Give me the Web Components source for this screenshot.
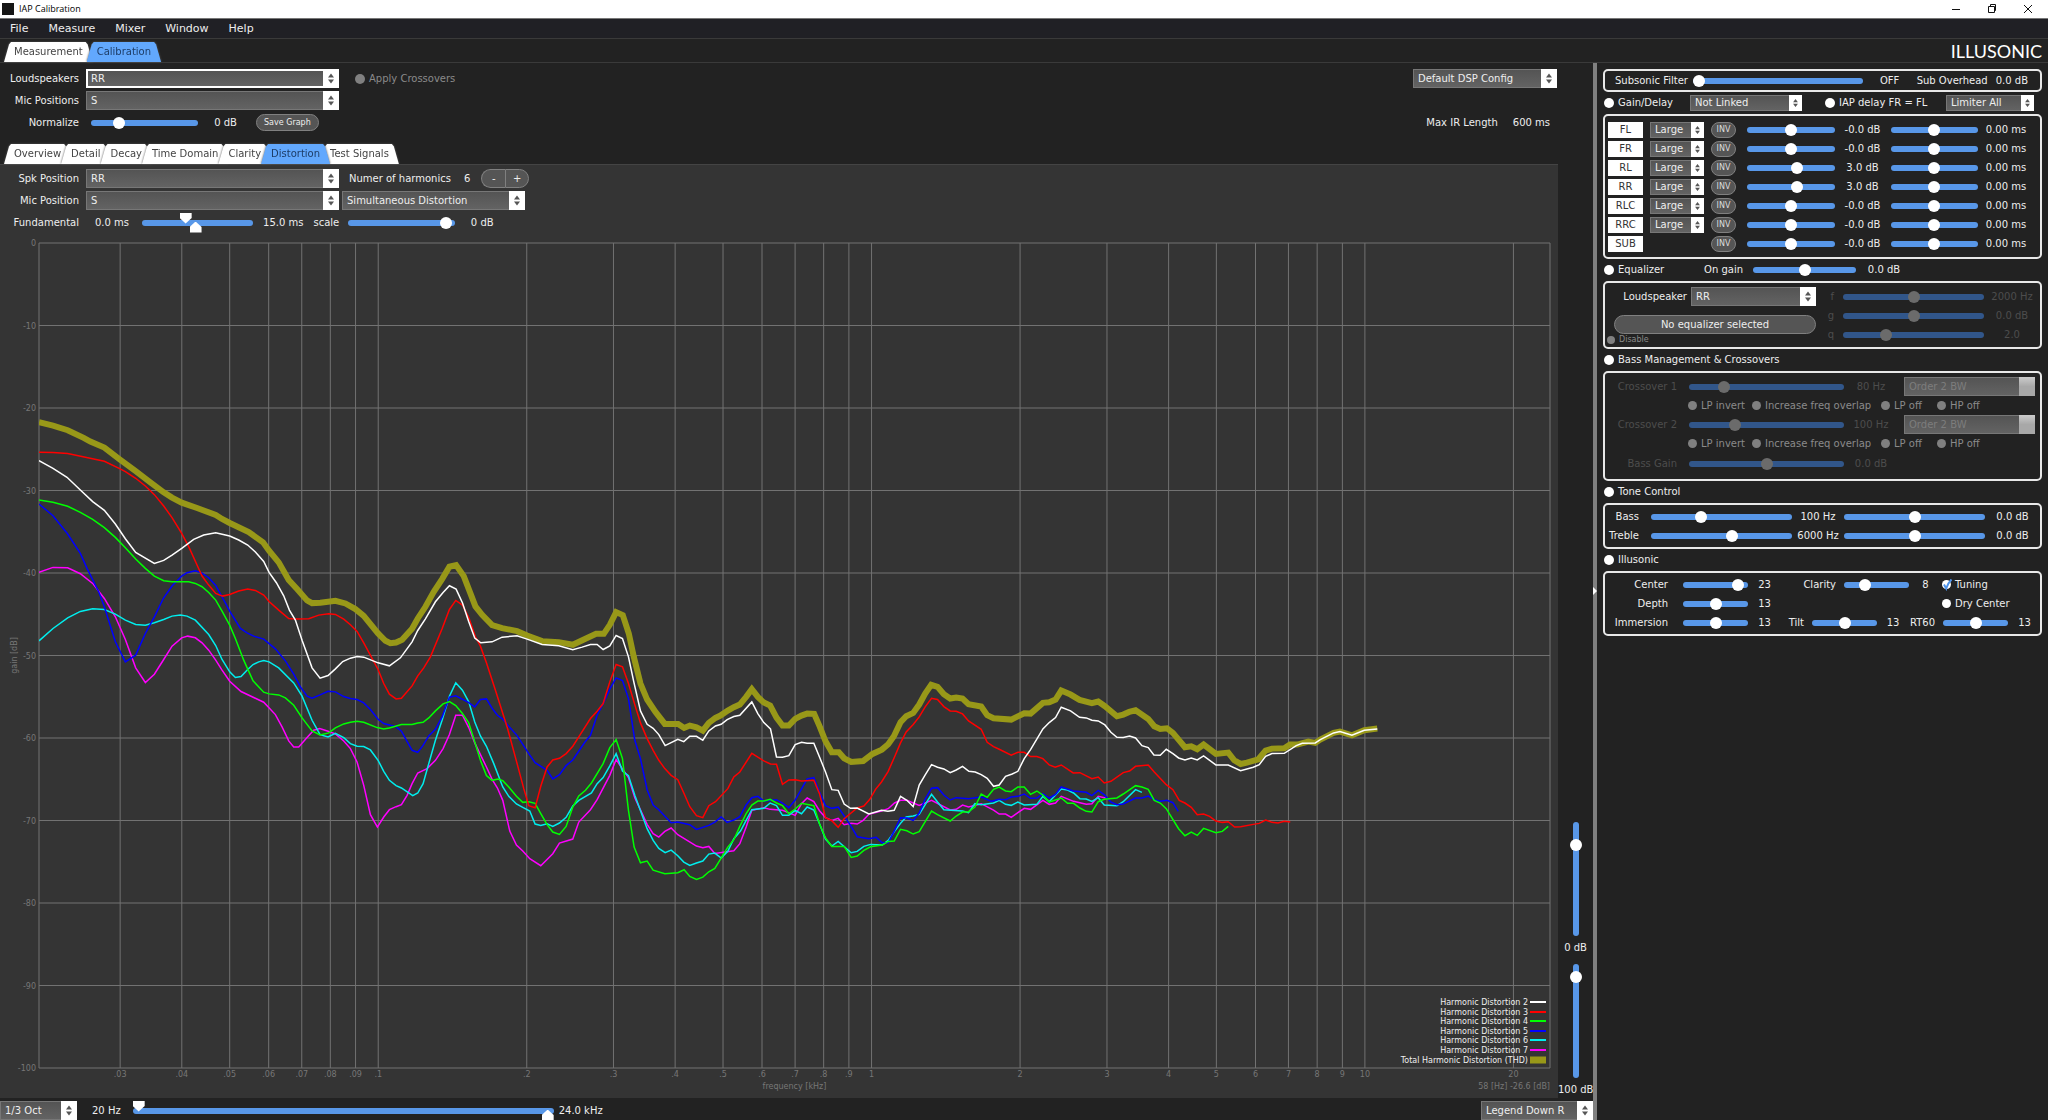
<!DOCTYPE html>
<html lang="en">
<head>
<meta charset="utf-8">
<title>IAP Calibration</title>
<style>
  html, body { margin: 0; height: 100%; }
  body {
    background: #222;
    color: #eee;
    font: 10px/12px "DejaVu Sans", Verdana, sans-serif;
  }
</style>
</head>
<body>
<iap-app></iap-app>

<script>
// Slider with its label and value: label | track | value
class IapSlider extends HTMLElement {
  constructor() {
    super();
    this.attachShadow({ mode: 'open' });
  }

  connectedCallback() {
    const label = this.getAttribute('label') || '';
    const name = this.getAttribute('name') || 'value';
    const text = this.getAttribute('text') || '';
    const value = this.getAttribute('value') || 50;
    const disabled = this.hasAttribute('disabled') ? 'disabled' : '';
    this.shadowRoot.innerHTML = `
      <style>
        :host {
          display: flex;
          align-items: center;
          flex: 1 1 auto;
          min-width: 0;
          white-space: nowrap;
        }
        label {
          flex: none;
          width: var(--label-w, auto);
          margin-right: var(--label-gap, 12px);
          text-align: right;
        }
        output {
          flex: none;
          width: var(--out-w, 56px);
          text-align: center;
        }
        input {
          -webkit-appearance: none;
          appearance: none;
          flex: var(--track, 1 1 40px);
          width: 40px;
          min-width: 0;
          height: 12px;
          margin: 0;
          background: none;
        }
        input::-webkit-slider-runnable-track {
          height: 6px;
          border-radius: 3px;
          background: #5897e8;
        }
        input::-webkit-slider-thumb {
          -webkit-appearance: none;
          width: 12px;
          height: 12px;
          margin-top: -3px;
          border-radius: 50%;
          background: #fff;
        }
        :host([disabled]) { color: #4d4d4d; }
        :host([disabled]) input::-webkit-slider-runnable-track { background: #31568a; }
        :host([disabled]) input::-webkit-slider-thumb { background: #6b6b6b; }

        :host([vertical]) { flex: none; flex-direction: column; }
        :host([vertical]) input {
          flex: none;
          writing-mode: vertical-lr;
          direction: rtl;
          width: 12px;
          height: 114px;
        }
        :host([vertical]) input::-webkit-slider-runnable-track {
          width: 6px;
          height: auto;
        }
        :host([vertical]) input::-webkit-slider-thumb {
          margin-top: 0;
          margin-left: -3px;
        }
        :host([vertical]) output { margin-top: 6px; }
      </style>
      ${label ? `<label for="range">${label}</label>` : ''}
      <input type="range" id="range" min="0" max="100" value="${value}" aria-label="${label || name}" ${disabled}>
      ${text ? `<output for="range">${text}</output>` : ''}
    `;
  }
}

// Slider with a lower and an upper handle on one track
class IapRange extends HTMLElement {
  constructor() {
    super();
    this.attachShadow({ mode: 'open' });
  }

  connectedCallback() {
    const name = this.getAttribute('name') || '';
    this.shadowRoot.innerHTML = `
      <style>
        :host { display: grid; align-items: center; }
        input {
          -webkit-appearance: none;
          appearance: none;
          grid-area: 1 / 1;
          width: 100%;
          height: 20px;
          margin: 0;
          background: none;
          pointer-events: none;
        }
        input::-webkit-slider-runnable-track { height: 6px; border-radius: 3px; }
        .low::-webkit-slider-runnable-track { background: #5897e8; }
        input::-webkit-slider-thumb {
          -webkit-appearance: none;
          width: 12px;
          height: 11px;
          background: #fff;
          pointer-events: auto;
        }
        .low::-webkit-slider-thumb {
          margin-top: -7px;
          clip-path: polygon(0 0, 100% 0, 100% 50%, 50% 100%, 0 50%);
        }
        .high::-webkit-slider-thumb {
          margin-top: 2px;
          clip-path: polygon(50% 0, 100% 50%, 100% 100%, 0 100%, 0 50%);
        }
      </style>
      <input class="low" type="range" value="${this.getAttribute('low')}" aria-label="${name} from">
      <input class="high" type="range" value="${this.getAttribute('high')}" aria-label="${name} to">
    `;
  }
}

// Drop-down with the white stepper box at its right end
class IapSelect extends HTMLElement {
  constructor() {
    super();
    this.attachShadow({ mode: 'open' });
  }

  connectedCallback() {
    const label = this.getAttribute('label') || '';
    const name = this.getAttribute('name') || label;
    const disabled = this.hasAttribute('disabled') ? 'disabled' : '';
    this.shadowRoot.innerHTML = `
      <style>
        :host { display: flex; align-items: center; white-space: nowrap; }
        label {
          width: var(--label-w, auto);
          margin-right: var(--label-gap, 7px);
          text-align: right;
        }
        .box {
          display: grid;
          grid-template-columns: minmax(0, 1fr) var(--arrow-w, 16px);
          flex: none;
          width: var(--box-w, 253px);
          height: var(--box-h, 19px);
        }
        select {
          -webkit-appearance: none;
          appearance: none;
          grid-area: 1 / 1 / 2 / 3;
          box-sizing: border-box;
          width: 100%;
          height: 100%;
          margin: 0;
          padding: 0 4px;
          border: 1px solid #777;
          border-radius: 0;
          background: linear-gradient(#545454, #636363);
          color: #eee;
          font: inherit;
        }
        svg {
          grid-area: 1 / 2;
          width: 100%;
          height: 100%;
          background: #fff;
          pointer-events: none;
        }
        :host([focused]) select { border: 2px solid #fff; padding: 0 3px; }
        :host([disabled]) select { color: #7d7d7d; opacity: 1; }
        :host([disabled]) svg { background: linear-gradient(#ccc, #a8a8a8 50%); }
        :host([disabled]) path { display: none; }
      </style>
      ${label ? `<label for="list">${label}</label>` : ''}
      <div class="box">
        <select id="list" aria-label="${name}" ${disabled}><option>${this.getAttribute('value')}</option></select>
        <svg viewBox="0 0 16 19"><path d="M8 4.5 11 8.5H5zM8 14.5 11 10.5H5z" fill="#555"/></svg>
      </div>
    `;
  }
}

class IapCheck extends HTMLElement {
  constructor() {
    super();
    this.attachShadow({ mode: 'open' });
  }

  connectedCallback() {
    const checked = this.hasAttribute('checked') ? 'checked' : '';
    const disabled = this.hasAttribute('disabled') ? 'disabled' : '';
    this.shadowRoot.innerHTML = `
      <style>
        :host { display: flex; align-items: center; white-space: nowrap; }
        label { display: flex; align-items: center; gap: 4px; }
        .mark { display: grid; place-items: center; }
        input {
          -webkit-appearance: none;
          appearance: none;
          grid-area: 1 / 1;
          width: var(--dot, 10px);
          height: var(--dot, 10px);
          margin: 0;
          border-radius: 50%;
          background: #fff;
        }
        svg { grid-area: 1 / 1; width: 10px; height: 12px; margin-right: -1px; pointer-events: none; display: none; }
        input:checked + svg { display: block; }
        :host([disabled]) { color: #8a8a8a; }
        :host([disabled]) input { background: #808080; }
      </style>
      <label>
        <span class="mark">
          <input type="checkbox" ${checked} ${disabled}>
          <svg viewBox="0 0 10 12"><path d="M2 5.5 4.2 9.5Q5.5 4.5 9.5 0.5" fill="none" stroke="#4e93ea" stroke-width="2"/></svg>
        </span>
        <slot></slot>
      </label>
    `;
  }
}

class IapTabs extends HTMLElement {
  constructor() {
    super();
    this.attachShadow({ mode: 'open' });
  }

  connectedCallback() {
    const active = this.getAttribute('active');
    const tabs = this.getAttribute('tabs').split(',');
    this.shadowRoot.innerHTML = `
      <style>
        :host { display: block; }
        nav { display: flex; padding-left: 4px; }
        button {
          position: relative;
          z-index: 0;
          height: 20px;
          margin: 0 var(--overlap, -10px) 0 0;
          padding: 0 10px;
          border: 0;
          background: none;
          color: #444;
          font: inherit;
          filter: drop-shadow(0 0 1px #555);
        }
        button::before {
          content: '';
          position: absolute;
          inset: 0;
          z-index: -1;
          background: #fff;
          clip-path: polygon(0 100%, 5px 12%, 7px 0, calc(100% - 7px) 0, calc(100% - 5px) 12%, 100% 100%);
        }
        button[aria-selected="true"] { z-index: 1; color: #1d3c66; }
        button[aria-selected="true"]::before { background: #62a8fd; }
      </style>
      <nav role="tablist">
        ${tabs.map(t => `<button role="tab" aria-selected="${t === active}">${t}</button>`).join('')}
      </nav>
    `;
  }
}

// Heading row and a bordered box under it
class IapSection extends HTMLElement {
  constructor() {
    super();
    this.attachShadow({ mode: 'open' });
  }

  connectedCallback() {
    this.shadowRoot.innerHTML = `
      <style>
        :host { display: block; }
        header {
          display: flex;
          align-items: center;
          height: 22px;
          padding-left: 1px;
        }
        :host([plain]) header { display: none; }
        .box {
          border: 2px solid #e8e8e8;
          border-radius: 5px;
          padding: var(--box-pad, 3px 0);
        }
      </style>
      <header><slot name="head"></slot></header>
      <div class="box"><slot></slot></div>
    `;
  }
}

class IapChannel extends HTMLElement {
  constructor() {
    super();
    this.attachShadow({ mode: 'open' });
  }

  connectedCallback() {
    const name = this.getAttribute('name');
    const size = this.getAttribute('size');
    this.shadowRoot.innerHTML = `
      <style>
        :host {
          display: flex;
          align-items: center;
          height: 16px;
          margin-bottom: 3px;
          padding: 0 6px 0 3px;
        }
        :host(:last-child) { margin-bottom: 0; }
        .name {
          width: 35px;
          line-height: 16px;
          margin-right: 7px;
          background: #fff;
          color: #333;
          text-align: center;
        }
        .size { width: 54px; margin-right: 7px; }
        iap-select { --box-w: 54px; --box-h: 16px; --arrow-w: 13px; }
        button {
          width: 25px;
          height: 16px;
          margin-right: 11px;
          padding: 0;
          border: 1px solid #808080;
          border-radius: 8px;
          background: #555;
          color: #ddd;
          font: inherit;
          font-size: 8px;
          line-height: 10px;
        }
      </style>
      <span class="name">${name}</span>
      <span class="size">${size ? `<iap-select name="${name} size" value="${size}"></iap-select>` : ''}</span>
      <button>INV</button>
      <iap-slider name="${name} gain" value="${this.getAttribute('value')}" text="${this.getAttribute('gain')}"></iap-slider>
      <iap-slider name="${name} delay" value="50" text="0.00 ms"></iap-slider>
    `;
  }
}

// Traces, drawn in thirds of a pixel at the default window size
const TRACES = [
  ['Total Harmonic Distortion (THD)', '#989818', `26,67 68,77 112,91 160,114 180,125 222,143 268,178 315,213 360,247 400,277 425,293 454,308 500,324 556,345 575,357 598,369 655,396 698,427 716,452 745,487 775,540 800,567 830,601 845,609 870,608 915,602 945,610 975,627 1000,647 1043,700 1065,722 1080,729 1097,727 1115,719 1145,686 1162,655 1185,620 1210,575 1235,537 1257,500 1277,495 1300,528 1320,580 1335,619 1355,644 1385,675 1415,684 1460,693 1490,706 1535,723 1585,726 1627,734 1665,716 1697,701 1720,701 1738,674 1757,636 1777,645 1795,700 1810,770 1830,850 1850,898 1875,935 1903,971 1943,971 1961,983 1978,976 1998,981 2017,991 2035,968 2055,953 2070,946 2092,931 2110,921 2128,913 2147,890 2164,867 2182,890 2200,907 2219,916 2238,952 2256,976 2275,976 2294,956 2313,946 2330,940 2351,941 2368,980 2385,1023 2404,1056 2425,1056 2441,1074 2462,1085 2498,1082 2526,1061 2554,1048 2573,1032 2590,1008 2610,966 2627,948 2648,938 2666,913 2684,880 2702,854 2721,860 2740,882 2759,895 2777,892 2796,895 2814,912 2852,919 2870,945 2889,954 2942,958 2981,939 3000,940 3037,908 3056,906 3075,898 3092,871 3120,883 3147,899 3184,909 3203,904 3223,918 3259,948 3278,943 3296,935 3315,930 3353,956 3371,978 3389,986 3409,984 3427,998 3463,1041 3482,1038 3500,1047 3519,1033 3556,1061 3593,1057 3611,1080 3630,1091 3649,1087 3683,1077 3705,1051 3724,1045 3761,1044 3778,1033 3800,1033 3833,1024 3854,1028 3869,1018 3909,998 3928,994 3964,1005 4001,990 4040,985`],
  ['Harmonic Distortion 7', '#f0f', `26,517 68,502 112,503 150,521 187,550 222,595 255,650 285,718 316,803 345,847 372,822 400,778 425,738 454,713 472,708 495,713 515,728 535,750 556,780 575,810 598,843 632,874 670,892 700,906 735,943 755,980 775,1022 790,1040 805,1040 830,1012 850,990 868,985 893,993 915,1001 940,1022 960,1045 980,1085 1000,1155 1020,1243 1041,1280 1060,1250 1077,1228 1097,1219 1113,1213 1130,1185 1145,1150 1162,1118 1190,1105 1215,1080 1238,1045 1257,1003 1276,945 1296,945 1315,982 1333,1028 1350,1063 1368,1100 1385,1137 1401,1163 1417,1200 1438,1292 1458,1334 1477,1352 1498,1375 1531,1396 1567,1360 1587,1328 1627,1316 1645,1265 1680,1228 1700,1198 1738,1125 1757,1078 1794,1132 1813,1192 1850,1272 1868,1300 1885,1310 1903,1293 1922,1283 1942,1303 1998,1337 2017,1342 2035,1338 2053,1359 2110,1351 2128,1330 2147,1280 2164,1230 2200,1222 2219,1227 2256,1230 2294,1245 2313,1210 2330,1193 2350,1204 2367,1231 2385,1252 2404,1260 2423,1254 2441,1273 2462,1269 2480,1271 2498,1260 2515,1242 2553,1232 2573,1225 2592,1208 2610,1200 2629,1200 2666,1215 2703,1200 2759,1229 2777,1227 2796,1214 2814,1220 2852,1210 2889,1229 2906,1241 2925,1241 2942,1251 2962,1237 2981,1224 3000,1227 3037,1200 3056,1212 3075,1208 3092,1188 3129,1203 3167,1212 3184,1210 3203,1188 3225,1193`],
  ['Harmonic Distortion 6', '#0ee', `26,722 68,685 112,653 150,634 187,626 222,628 255,642 285,660 316,673 345,675 372,668 400,658 425,648 450,645 470,648 495,660 535,703 556,736 575,778 598,815 615,832 632,829 652,808 668,793 685,785 700,781 716,785 745,803 790,848 815,888 845,960 869,1003 893,1010 915,999 940,1012 960,1030 980,1038 1000,1039 1020,1049 1043,1080 1060,1113 1077,1140 1097,1156 1113,1163 1147,1186 1162,1178 1178,1150 1195,1090 1215,1020 1235,960 1257,888 1276,848 1296,870 1315,905 1333,965 1350,1007 1368,1038 1390,1090 1417,1160 1435,1188 1458,1211 1477,1221 1498,1232 1514,1271 1531,1275 1550,1270 1567,1278 1587,1268 1607,1251 1627,1217 1645,1200 1683,1178 1700,1150 1718,1132 1738,1097 1757,1060 1776,1112 1794,1126 1813,1185 1850,1285 1868,1320 1885,1344 1904,1357 1922,1349 1942,1366 1960,1385 1978,1395 1998,1388 2017,1382 2035,1361 2053,1358 2072,1373 2092,1353 2110,1315 2130,1292 2164,1228 2200,1224 2219,1208 2238,1216 2256,1245 2275,1245 2294,1230 2313,1240 2330,1220 2350,1229 2367,1270 2385,1316 2404,1337 2423,1323 2462,1357 2480,1353 2500,1338 2520,1332 2555,1334 2573,1320 2592,1293 2610,1269 2627,1250 2648,1247 2666,1242 2684,1213 2703,1182 2721,1205 2740,1228 2796,1232 2814,1237 2833,1210 2852,1213 2889,1208 2906,1200 2925,1212 2942,1215 2962,1205 2981,1214 3019,1212 3037,1188 3056,1204 3092,1166 3111,1169 3129,1178 3148,1195 3167,1196 3184,1203 3203,1192 3221,1214 3259,1216 3278,1204 3315,1168 3334,1176`],
  ['Harmonic Distortion 5', '#00f', `26,312 68,347 112,402 150,460 170,505 205,575 222,620 255,725 285,785 316,765 345,700 372,650 400,593 425,558 454,528 470,518 495,512 515,519 535,533 556,556 575,590 598,633 630,685 650,698 670,708 700,717 735,746 765,782 790,822 810,860 830,888 845,894 869,884 893,873 915,875 940,889 960,895 980,898 1000,908 1020,928 1043,957 1060,970 1077,974 1097,979 1113,993 1127,1018 1145,1050 1162,1056 1177,1037 1195,1007 1215,987 1235,950 1257,891 1276,887 1296,897 1315,907 1333,920 1350,898 1368,896 1385,924 1401,945 1415,955 1460,1006 1495,1060 1514,1087 1550,1110 1567,1136 1587,1123 1607,1096 1627,1079 1663,1026 1680,1005 1700,945 1718,910 1738,867 1757,833 1776,841 1794,895 1813,1020 1830,1075 1850,1168 1868,1214 1885,1228 1922,1267 1942,1265 1978,1273 1998,1287 2035,1275 2053,1265 2072,1250 2090,1266 2110,1259 2128,1249 2147,1214 2164,1192 2182,1188 2200,1202 2238,1198 2256,1208 2275,1222 2294,1199 2330,1136 2350,1132 2367,1175 2385,1216 2404,1224 2423,1220 2460,1275 2480,1309 2515,1315 2537,1311 2555,1327 2573,1327 2592,1290 2610,1252 2629,1253 2648,1260 2666,1238 2684,1196 2703,1164 2721,1162 2740,1184 2759,1199 2777,1192 2814,1195 2852,1190 2883,1203 2906,1197 2925,1198 2942,1190 2962,1188 2981,1181 3000,1194 3019,1193 3037,1180 3056,1193 3075,1182 3092,1160 3128,1172 3167,1176 3184,1186 3203,1170 3221,1183 3241,1205 3259,1213 3278,1211 3315,1193 3334,1193 3353,1187 3371,1198 3389,1203 3409,1200 3427,1207 3443,1233`],
  ['Harmonic Distortion 4', '#0f0', `26,300 68,307 112,319 150,337 187,358 222,383 255,412 285,443 316,477 345,505 372,528 400,542 425,545 475,545 495,550 515,560 535,577 556,600 575,633 598,675 615,715 640,780 668,842 700,876 716,881 745,884 765,893 790,915 815,953 845,992 869,1004 895,998 915,983 940,971 960,966 980,963 1000,966 1040,982 1060,986 1077,983 1113,973 1145,973 1162,968 1178,966 1195,953 1215,932 1238,911 1257,904 1276,916 1296,940 1315,968 1333,1025 1350,1080 1368,1126 1385,1140 1403,1136 1417,1141 1435,1160 1458,1188 1477,1206 1495,1204 1514,1209 1531,1240 1550,1273 1567,1295 1587,1302 1607,1278 1627,1220 1645,1187 1665,1170 1683,1148 1718,1090 1738,1042 1757,1018 1776,1075 1794,1230 1811,1340 1830,1387 1850,1382 1868,1409 1903,1420 1942,1417 1961,1408 1978,1428 1998,1437 2017,1430 2035,1414 2053,1404 2072,1373 2092,1340 2110,1318 2128,1278 2147,1240 2164,1214 2182,1202 2200,1202 2219,1197 2238,1208 2256,1216 2275,1240 2294,1226 2313,1209 2350,1216 2367,1270 2385,1313 2404,1338 2441,1338 2462,1371 2480,1367 2500,1350 2520,1339 2555,1334 2573,1323 2591,1322 2610,1287 2629,1291 2648,1301 2666,1294 2684,1264 2703,1232 2721,1243 2759,1262 2777,1247 2796,1235 2814,1234 2833,1220 2852,1181 2870,1191 2889,1167 2906,1160 2925,1172 2942,1174 2962,1160 2981,1160 3000,1182 3019,1172 3037,1184 3056,1205 3092,1193 3111,1209 3129,1209 3148,1223 3167,1233 3184,1235 3203,1204 3221,1197 3259,1193 3278,1181 3315,1156 3334,1160 3353,1167 3371,1200 3389,1208 3407,1225 3444,1285 3463,1306 3482,1295 3500,1305 3519,1284 3556,1297 3575,1293 3593,1278`],
  ['Harmonic Distortion 3', '#f00', `26,157 68,158 112,161 222,184 268,206 285,215 316,235 345,258 372,284 400,318 425,353 454,400 475,440 500,495 515,528 535,555 556,580 577,588 598,583 625,573 652,567 675,571 700,585 716,604 745,630 775,655 795,657 835,656 865,645 895,641 915,643 940,657 960,674 980,694 1000,728 1043,808 1060,850 1077,882 1097,896 1113,894 1145,857 1162,827 1180,803 1200,770 1235,686 1257,628 1276,601 1296,615 1315,652 1335,710 1350,738 1368,788 1395,870 1430,980 1460,1090 1480,1165 1495,1216 1514,1222 1531,1158 1550,1100 1567,1079 1587,1074 1607,1060 1627,1038 1645,1010 1680,955 1700,933 1718,910 1738,845 1757,793 1776,800 1794,850 1815,920 1830,968 1850,1015 1868,1050 1885,1080 1903,1105 1922,1125 1942,1138 1960,1178 1978,1219 1998,1246 2017,1252 2035,1216 2055,1204 2092,1165 2110,1130 2128,1115 2164,1059 2200,1082 2220,1091 2238,1092 2256,1152 2275,1139 2294,1138 2313,1142 2350,1140 2367,1180 2385,1252 2404,1261 2423,1281 2441,1255 2480,1223 2500,1217 2518,1197 2535,1167 2553,1145 2573,1113 2592,1070 2610,1028 2627,995 2648,973 2666,950 2684,920 2703,894 2721,898 2740,919 2759,932 2777,933 2796,941 2814,962 2852,987 2870,1026 2889,1039 2906,1047 2942,1065 2962,1056 2981,1056 3000,1069 3019,1069 3037,1075 3056,1094 3074,1101 3092,1094 3128,1118 3148,1117 3184,1135 3203,1130 3221,1148 3241,1143 3278,1117 3297,1112 3315,1098 3353,1094 3371,1115 3407,1153 3427,1168 3446,1200 3463,1208 3482,1221 3500,1243 3519,1241 3537,1248 3556,1262 3575,1266 3593,1264 3612,1280 3630,1279 3668,1272 3686,1269 3705,1259 3724,1266 3742,1268 3761,1263 3779,1265`],
  ['Harmonic Distortion 2', '#fff', `26,182 68,205 110,232 150,270 187,305 222,331 255,372 285,416 316,457 372,490 400,481 425,465 454,445 490,418 520,405 556,398 598,408 625,420 652,435 675,456 700,484 716,517 738,548 760,587 777,630 795,660 815,720 845,803 869,834 893,826 915,806 937,784 960,774 980,769 1000,771 1043,788 1077,797 1110,773 1145,725 1162,691 1185,656 1215,605 1238,577 1257,557 1277,567 1296,608 1315,665 1333,714 1351,728 1385,725 1415,711 1460,707 1490,717 1535,733 1585,737 1627,749 1655,741 1680,733 1700,733 1718,748 1738,737 1757,706 1776,715 1794,770 1810,845 1830,932 1850,972 1868,984 1885,1003 1904,1036 1942,1017 1960,1024 1978,1008 1998,1008 2017,1020 2035,992 2055,977 2072,972 2090,958 2110,949 2128,945 2164,905 2182,940 2200,967 2220,986 2238,1070 2256,1071 2275,1066 2294,1033 2313,1026 2330,1029 2350,1029 2367,1070 2385,1115 2404,1168 2423,1170 2441,1211 2460,1224 2480,1223 2515,1241 2553,1230 2572,1233 2591,1230 2610,1188 2629,1200 2648,1219 2666,1154 2684,1124 2703,1093 2721,1101 2740,1106 2759,1117 2777,1109 2796,1098 2815,1113 2834,1115 2852,1123 2870,1134 2889,1158 2906,1154 2925,1128 2945,1121 2962,1113 2981,1075 3000,1048 3037,986 3056,967 3075,952 3092,921 3120,932 3147,951 3167,953 3184,960 3203,962 3223,974 3241,996 3259,1011 3278,1012 3297,1007 3315,1013 3334,1036 3353,1042 3370,1064 3389,1065 3407,1047 3427,1060 3444,1073 3463,1079 3482,1073 3500,1079 3519,1067 3556,1094 3593,1094 3630,1111 3668,1101 3686,1093 3705,1068 3724,1060 3761,1059 3797,1036 3815,1029 3854,1028 3869,1018 3909,998 3928,994 3964,1005 4001,990 4040,986`],
];

class IapPlot extends HTMLElement {
  constructor() {
    super();
    this.attachShadow({ mode: 'open' });
  }

  connectedCallback() {
    // log axis from 20.5 Hz to 23.7 kHz, in percent of the width
    const min = Math.log10(0.02054);
    const max = Math.log10(23.72);
    const x = f => ((Math.log10(f) - min) / (max - min) * 100).toFixed(2) + '%';

    const freqs = [];
    for (const decade of [0.01, 0.1, 1, 10]) {
      for (let i = 1; i < 10; i++) {
        const f = decade * i;
        if (f > 0.021 && f < 21 && !(f > 11 && f < 19)) {
          freqs.push(Number(f.toFixed(2)));
        }
      }
    }

    const columns = freqs.map(f => `
      <line x1="${x(f)}" x2="${x(f)}" y1="0" y2="100%"/>
      <text x="${x(f)}" y="100%" dy="9" text-anchor="middle">${String(f).replace(/^0/, '')}</text>`).join('');

    let rows = '';
    for (let i = 0; i <= 10; i++) {
      rows += `
        <line x1="0" x2="100%" y1="${i * 10}%" y2="${i * 10}%"/>
        <text x="-3" y="${i * 10}%" dy="3" text-anchor="end">${i ? -10 * i : 0}</text>`;
    }

    const traces = TRACES.map(([, color, points], i) => `
      <polyline points="${points}" stroke="${color}" stroke-width="${i ? 1.5 : 6}"/>`).join('');

    const legend = [...TRACES].reverse().map(([name, color], i) => {
      const y = Math.round(-66 + i * 9.6);
      return `
        <text class="key" x="-22" y="${y}" dy="3" text-anchor="end">${name}</text>
        <line x1="-20" x2="-4" y1="${y}" y2="${y}" style="stroke:${color};stroke-width:${i === 6 ? 7 : 2}"/>`;
    }).join('');

    this.shadowRoot.innerHTML = `
      <style>
        :host { display: flex; padding: 11px 8px 30px 39px; }
        .plot { flex: 1; min-width: 0; overflow: visible; }
        line { stroke: #727272; }
        text { fill: #777; font-size: 8px; }
        .key { fill: #eee; }
        polyline { fill: none; vector-effect: non-scaling-stroke; }
      </style>
      <svg class="plot">
        ${columns}
        ${rows}
        <line x1="0" x2="0" y1="0" y2="100%"/>
        <line x1="100%" x2="100%" y1="0" y2="100%"/>
        <svg width="100%" height="100%" viewBox="26 -470 4532 2472" preserveAspectRatio="none">${traces}</svg>
        <text x="50%" y="100%" dy="21" text-anchor="middle">frequency [kHz]</text>
        <text x="100%" y="100%" dy="21" text-anchor="end">58 [Hz] -26.6 [dB]</text>
        <svg x="-25" y="50%" overflow="visible"><text transform="rotate(-90)" x="0" y="3" text-anchor="middle">gain [dB]</text></svg>
        <svg x="100%" y="100%" overflow="visible">${legend}</svg>
      </svg>
    `;
  }
}

class IapSidebar extends HTMLElement {
  constructor() {
    super();
    this.attachShadow({ mode: 'open' });
  }

  connectedCallback() {
    const channels = [
      ['FL', 'Large', 50, '-0.0 dB'],
      ['FR', 'Large', 50, '-0.0 dB'],
      ['RL', 'Large', 58, '3.0 dB'],
      ['RR', 'Large', 58, '3.0 dB'],
      ['RLC', 'Large', 50, '-0.0 dB'],
      ['RRC', 'Large', 50, '-0.0 dB'],
      ['SUB', '', 50, '-0.0 dB'],
    ].map(([name, size, value, gain]) =>
      `<iap-channel name="${name}" size="${size}" value="${value}" gain="${gain}"></iap-channel>`).join('');

    const crossover = (n, value, text) => `
      <div class="row">
        <iap-slider class="cross" label="Crossover ${n}" value="${value}" text="${text}" disabled></iap-slider>
        <iap-select class="order" name="Crossover ${n} order" value="Order 2 BW" disabled></iap-select>
      </div>
      <div class="row checks">
        <iap-check disabled>LP invert</iap-check>
        <iap-check disabled>Increase freq overlap</iap-check>
        <iap-check disabled>LP off</iap-check>
        <iap-check disabled>HP off</iap-check>
      </div>`;

    this.shadowRoot.innerHTML = `
      <style>
        :host { display: block; padding: 6px 6px 0; }
        .row { display: flex; align-items: center; height: 19px; }
        .toggle { width: 86px; }
        .subsonic { height: 13px; padding: 0 12px 0 10px; }
        .subsonic iap-slider { --label-w: 72px; --label-gap: 6px; --out-w: 54px; }
        .overhead { display: flex; gap: 8px; white-space: nowrap; }
        .gain { --box-pad: 6px 0 5px; }
        .small { --box-h: 16px; --arrow-w: 13px; }
        .ongain { flex: none; width: 222px; --label-w: 53px; --label-gap: 10px; }

        .eq { --box-pad: 4px 0 1px; }
        .eq-body { display: grid; grid-template-columns: 211px minmax(0, 1fr); }
        .eq-left { display: grid; gap: 9px; padding-left: 9px; }
        .eq-left iap-select { --label-w: 73px; --label-gap: 4px; --box-w: 125px; }
        .pill {
          height: 19px;
          padding: 0;
          border: 1px solid #808080;
          border-radius: 10px;
          background: #555;
          color: #eee;
          font: inherit;
        }
        .disable { height: 12px; padding-left: 2px; font-size: 8px; --dot: 8px; }
        .eq-right iap-slider { --label-w: 18px; --label-gap: 9px; }

        .bass { --box-pad: 4px 0; --dot: 9px; }
        .cross { --label-w: 72px; --out-w: 54px; }
        .order { margin: 0 5px 0 6px; --box-w: 131px; }
        .checks {
          display: grid;
          grid-template-columns: 64px 129px 56px auto;
          padding-left: 83px;
        }
        .bass-gain { height: 22px; padding-right: 142px; }

        .tone { --box-pad: 2px 0; }
        .tone iap-slider { --out-w: 55px; }
        .tone .first { --label-w: 34px; --out-w: 52px; }

        .spatial { --box-pad: 2px 0; --dot: 9px; }
        .spatial iap-slider { flex: none; --track: 0 0 65px; --out-w: 33px; }
        .spatial .first { --label-w: 63px; --label-gap: 15px; }
        .clarity { --label-w: 55px; --label-gap: 8px; }
        .tilt { --label-w: 23px; --label-gap: 8px; }
        .rt { --label-w: 26px; --label-gap: 8px; }
        .spatial .tilt { --out-w: 32px; }
        .dry { margin-left: 161px; }
      </style>

      <iap-section plain>
        <div class="row subsonic">
          <iap-slider label="Subsonic Filter" value="0" text="OFF"></iap-slider>
          <span class="overhead"><span>Sub Overhead</span><span>0.0 dB</span></span>
        </div>
      </iap-section>

      <iap-section class="gain">
        <iap-check class="toggle" slot="head">Gain/Delay</iap-check>
        <iap-select class="small" slot="head" name="Link" value="Not Linked" style="--box-w:112px;margin-right:23px"></iap-select>
        <iap-check slot="head">IAP delay FR = FL</iap-check>
        <iap-select class="small" slot="head" name="Limiter" value="Limiter All" style="--box-w:88px;margin:0 8px 0 auto"></iap-select>
        ${channels}
      </iap-section>

      <iap-section class="eq">
        <iap-check class="toggle" slot="head">Equalizer</iap-check>
        <iap-slider class="ongain" slot="head" label="On gain" value="50" text="0.0 dB"></iap-slider>
        <div class="eq-body">
          <div>
            <div class="eq-left">
              <iap-select label="Loudspeaker" value="RR"></iap-select>
              <button class="pill">No equalizer selected</button>
            </div>
            <iap-check class="disable" disabled>Disable</iap-check>
          </div>
          <div class="eq-right">
            <div class="row"><iap-slider label="f" value="50" text="2000 Hz" disabled></iap-slider></div>
            <div class="row"><iap-slider label="g" value="50" text="0.0 dB" disabled></iap-slider></div>
            <div class="row"><iap-slider label="q" value="29" text="2.0" disabled></iap-slider></div>
          </div>
        </div>
      </iap-section>

      <iap-section class="bass">
        <iap-check slot="head" style="--dot:10px">Bass Management &amp; Crossovers</iap-check>
        ${crossover(1, 20, '80 Hz')}
        ${crossover(2, 28, '100 Hz')}
        <div class="row bass-gain">
          <iap-slider class="cross" label="Bass Gain" value="50" text="0.0 dB" disabled></iap-slider>
        </div>
      </iap-section>

      <iap-section class="tone">
        <iap-check slot="head">Tone Control</iap-check>
        <div class="row">
          <iap-slider class="first" label="Bass" value="34" text="100 Hz"></iap-slider>
          <iap-slider name="Bass gain" value="50" text="0.0 dB"></iap-slider>
        </div>
        <div class="row">
          <iap-slider class="first" label="Treble" value="58" text="6000 Hz"></iap-slider>
          <iap-slider name="Treble gain" value="50" text="0.0 dB"></iap-slider>
        </div>
      </iap-section>

      <iap-section class="spatial">
        <iap-check slot="head" style="--dot:10px">Illusonic</iap-check>
        <div class="row">
          <iap-slider class="first" label="Center" value="93" text="23"></iap-slider>
          <iap-slider class="clarity" label="Clarity" value="28" text="8"></iap-slider>
          <iap-check checked>Tuning</iap-check>
        </div>
        <div class="row">
          <iap-slider class="first" label="Depth" value="50" text="13"></iap-slider>
          <iap-check class="dry">Dry Center</iap-check>
        </div>
        <div class="row">
          <iap-slider class="first" label="Immersion" value="50" text="13"></iap-slider>
          <iap-slider class="tilt" label="Tilt" value="50" text="13"></iap-slider>
          <iap-slider class="rt" label="RT60" value="50" text="13"></iap-slider>
        </div>
      </iap-section>
    `;
  }
}

class IapApp extends HTMLElement {
  constructor() {
    super();
    this.attachShadow({ mode: 'open' });
  }

  connectedCallback() {
    this.shadowRoot.innerHTML = `
      <style>
        :host { display: flex; flex-direction: column; min-height: 100vh; }
        .title {
          display: flex;
          align-items: center;
          height: 18px;
          border-bottom: 1px solid #777;
          background: #fff;
          color: #000;
          font: 9px/12px "Open Sans", sans-serif;
        }
        .title .app { width: 12px; height: 12px; margin: 0 5px 0 2px; background: #161616; }
        .title .buttons { display: flex; margin-left: auto; padding-right: 2px; }
        .title button {
          display: grid;
          place-items: center;
          width: 36px;
          height: 18px;
          padding: 0;
          border: 0;
          background: none;
        }
        .title button svg { width: 10px; height: 10px; fill: none; stroke: #111; }
        .menu {
          display: flex;
          align-items: center;
          gap: 20px;
          height: 19px;
          padding-left: 10px;
          border-bottom: 1px solid #3a3a3a;
          background: #202025;
        }
        .menu button { padding: 0; border: 0; background: none; color: #eee; font: inherit; font-size: 11px; }
        .top {
          display: flex;
          align-items: flex-end;
          justify-content: space-between;
          height: 23px;
          border-bottom: 1px solid #3a3a3a;
        }
        .top iap-tabs { --overlap: -6px; }
        .logo {
          align-self: center;
          margin-right: 6px;
          color: #fff;
          font: 18px/20px Lato, sans-serif;
        }
        main {
          flex: 1;
          display: grid;
          grid-template-columns: minmax(0, 1fr) 4px 451px;
        }
        .left { display: flex; flex-direction: column; }
        .split { display: flex; align-items: center; background: #808080; }
        .split svg { width: 4px; height: 8px; margin-bottom: 1px; }

        .form, .controls { display: grid; gap: 3px; --label-w: 79px; }
        .form { padding: 6px 36px 12px 0; }
        .controls { padding-top: 4px; }
        .row { display: flex; align-items: center; height: 19px; white-space: nowrap; }
        .end { margin-left: auto; }
        .row .wide { --box-w: 144px; }
        .normalize { flex: none; width: 253px; }
        .pill {
          height: 17px;
          margin-left: 3px;
          padding: 0 7px;
          border: 1px solid #808080;
          border-radius: 9px;
          background: #555;
          color: #eee;
          font: inherit;
          font-size: 8px;
        }
        .ir { display: flex; gap: 15px; padding-right: 7px; }
        .harm { display: flex; gap: 13px; margin: 0 11px 0 10px; }
        .step { display: flex; }
        .step button {
          width: 24px;
          height: 19px;
          padding: 0;
          border: 1px solid #808080;
          background: #555;
          color: #eee;
          font: inherit;
        }
        .step button:first-child { border-radius: 10px 0 0 10px; border-right: 0; }
        .step button:last-child { border-radius: 0 10px 10px 0; }
        .tag { width: 79px; text-align: right; }
        .from { margin: 0 13px 0 16px; }
        .to { margin: 0 10px; }
        .row .scale {
          flex: none;
          --label-w: auto;
          --label-gap: 9px;
          --track: 0 0 107px;
          --out-w: 54px;
        }

        .middle { flex: 1; display: flex; }
        .panel {
          flex: 1;
          min-width: 0;
          display: flex;
          flex-direction: column;
          border-top: 1px solid #444;
          background: #343434;
        }
        iap-plot { flex: 1; }
        .faders {
          display: flex;
          flex-direction: column;
          justify-content: flex-end;
          gap: 10px;
          width: 35px;
          padding-bottom: 2px;
          --out-w: 35px;
        }
        .bottom { display: flex; align-items: center; height: 19px; padding-top: 3px; }
        .bottom iap-range { width: 421px; margin: 0 5px 0 12px; }
      </style>

      <div class="title">
        <span class="app"></span>IAP Calibration
        <span class="buttons">
          <button aria-label="Minimize"><svg viewBox="0 0 10 10"><path d="M1 5.5H9"/></svg></button>
          <button aria-label="Restore"><svg viewBox="0 0 10 10"><path d="M1.5 2.5h6v6h-6zM3.5 2.5v-2h5v6h-1"/></svg></button>
          <button aria-label="Close"><svg viewBox="0 0 10 10"><path d="M1 1 9 9M9 1 1 9"/></svg></button>
        </span>
      </div>

      <div class="menu">
        <button>File</button><button>Measure</button><button>Mixer</button><button>Window</button><button>Help</button>
      </div>

      <div class="top">
        <iap-tabs tabs="Measurement,Calibration" active="Calibration"></iap-tabs>
        <span class="logo">ILLUSONIC</span>
      </div>

      <main>
        <div class="left">
          <div class="form">
            <div class="row">
              <iap-select label="Loudspeakers" value="RR" focused></iap-select>
              <iap-check disabled style="margin-left:16px">Apply Crossovers</iap-check>
              <iap-select class="wide end" name="DSP config" value="Default DSP Config"></iap-select>
            </div>
            <div class="row"><iap-select label="Mic Positions" value="S"></iap-select></div>
            <div class="row">
              <iap-slider class="normalize" label="Normalize" value="23" text="0 dB" style="--out-w:55px"></iap-slider>
              <button class="pill">Save Graph</button>
              <span class="ir end"><span>Max IR Length</span><span>600 ms</span></span>
            </div>
          </div>

          <iap-tabs tabs="Overview,Detail,Decay,Time Domain,Clarity,Distortion,Test Signals" active="Distortion"></iap-tabs>

          <div class="middle">
            <div class="panel">
              <div class="controls">
                <div class="row">
                  <iap-select label="Spk Position" value="RR"></iap-select>
                  <span class="harm"><span>Numer of harmonics</span><span>6</span></span>
                  <span class="step"><button>-</button><button>+</button></span>
                </div>
                <div class="row">
                  <iap-select label="Mic Position" value="S"></iap-select>
                  <iap-select name="Mode" value="Simultaneous Distortion" style="--box-w:183px;margin-left:3px"></iap-select>
                </div>
                <div class="row">
                  <span class="tag">Fundamental</span>
                  <span class="from">0.0 ms</span>
                  <iap-range name="Fundamental" low="38" high="48" style="width:111px"></iap-range>
                  <span class="to">15.0 ms</span>
                  <iap-slider class="scale" label="scale" value="97" text="0 dB"></iap-slider>
                </div>
              </div>
              <iap-plot></iap-plot>
            </div>
            <div class="faders">
              <iap-slider vertical name="Level" value="83" text="0 dB"></iap-slider>
              <iap-slider vertical name="Span" value="93" text="100 dB"></iap-slider>
            </div>
          </div>

          <div class="bottom">
            <iap-select name="Smoothing" value="1/3 Oct" style="--box-w:77px;margin-right:15px"></iap-select>
            <span>20 Hz</span>
            <iap-range name="Frequency" low="0" high="100"></iap-range>
            <span>24.0 kHz</span>
            <iap-select class="end" name="Legend" value="Legend Down R" style="--box-w:112px"></iap-select>
          </div>
        </div>

        <div class="split"><svg viewBox="0 0 4 8"><path d="M0 0 4 4 0 8z" fill="#fff"/></svg></div>
        <iap-sidebar></iap-sidebar>
      </main>
    `;
  }
}

customElements.define('iap-slider', IapSlider);
customElements.define('iap-range', IapRange);
customElements.define('iap-select', IapSelect);
customElements.define('iap-check', IapCheck);
customElements.define('iap-tabs', IapTabs);
customElements.define('iap-section', IapSection);
customElements.define('iap-channel', IapChannel);
customElements.define('iap-plot', IapPlot);
customElements.define('iap-sidebar', IapSidebar);
customElements.define('iap-app', IapApp);
</script>
</body>
</html>
